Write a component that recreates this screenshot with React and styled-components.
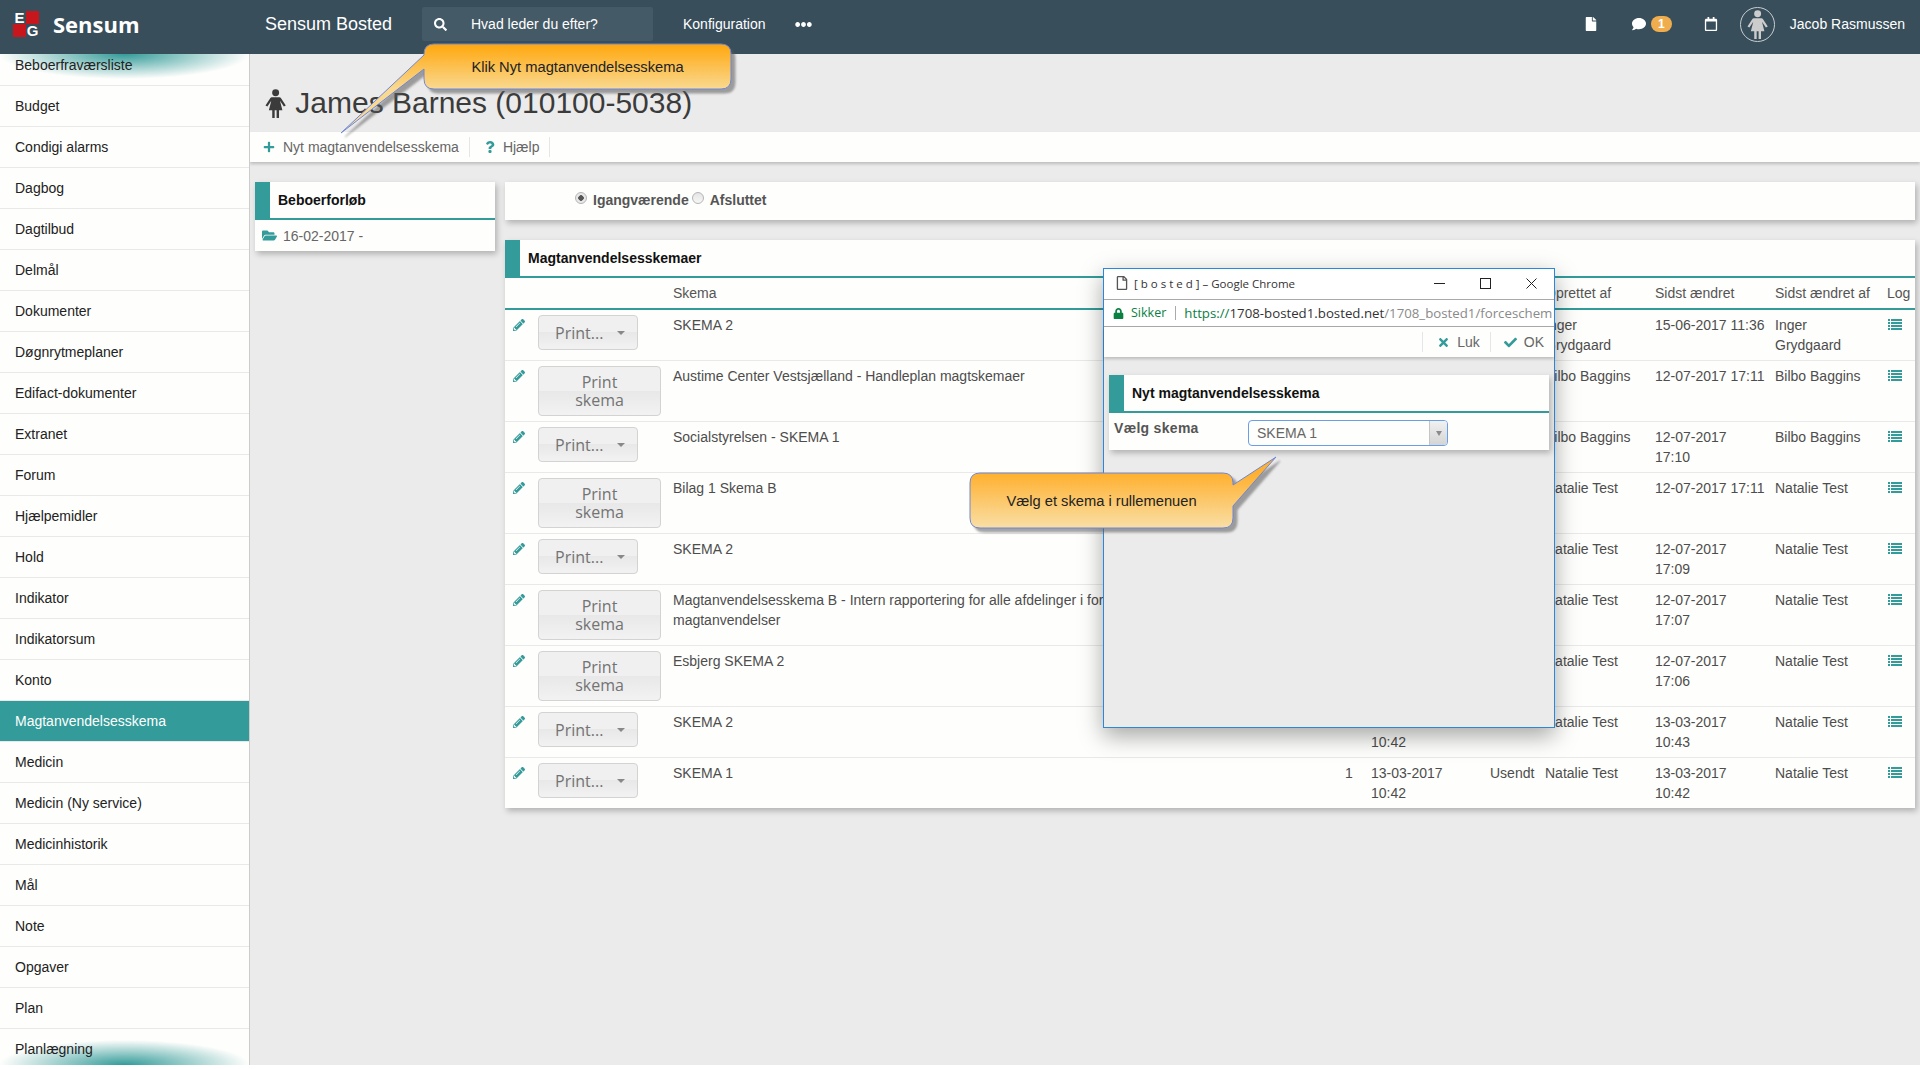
import React from "react";
import styled, { createGlobalStyle } from "styled-components";
import {
  FaSearch,
  FaEllipsisH,
  FaFile,
  FaRegFile,
  FaComment,
  FaRegCalendar,
  FaPlus,
  FaQuestion,
  FaFolderOpen,
  FaPencilAlt,
  FaTimes,
  FaCheck,
  FaLock,
} from "react-icons/fa";

const TEAL = "#339b99";

const GlobalStyle = createGlobalStyle`
  html, body {
    margin: 0;
    padding: 0;
    background: #ffffff;
  }
  body {
    font-family: "Liberation Sans", Arial, sans-serif;
    font-size: 14px;
    color: #4d4d4d;
  }
`;

const Page = styled.div`
  position: relative;
  width: 1920px;
  height: 1065px;
  display: flex;
  flex-direction: column;
  overflow: hidden;
  background: #ebebec;
`;

const Header = styled.header`
  height: 54px;
  flex: none;
  box-sizing: border-box;
  padding-bottom: 6px;
  display: flex;
  align-items: center;
  background: #384e5b;
  color: #ffffff;
  position: relative;
  z-index: 3;
`;

const Logo = styled.div`
  display: flex;
  align-items: center;
  width: 265px;
  padding-left: 13px;
  box-sizing: border-box;
`;

const LogoMark = styled.div`
  display: grid;
  grid-template-columns: 13px 13px;
  grid-template-rows: 13px 13px;
`;

const LogoCell = styled.span`
  display: flex;
  align-items: center;
  justify-content: center;
  font-weight: 700;
  font-size: 15px;
  line-height: 13px;
  background: ${(p) => (p.$red ? "#c8161d" : "transparent")};
`;

const LogoName = styled.span`
  font-family: "Open Sans", sans-serif;
  font-weight: 700;
  font-size: 22px;
  margin-left: 14px;
`;

const Product = styled.span`
  font-size: 18px;
  width: 157px;
`;

const Search = styled.div`
  width: 231px;
  height: 34px;
  display: flex;
  align-items: center;
  background: #445a66;
  border-radius: 2px;
  padding-left: 12px;
  box-sizing: border-box;
  font-size: 14px;
  svg {
    font-size: 13px;
    margin-right: 24px;
  }
`;

const MenuLink = styled.span`
  font-size: 14px;
  margin-left: 30px;
`;

const Dots = styled.span`
  display: flex;
  margin-left: 29px;
  font-size: 17px;
`;

const HeaderRight = styled.div`
  margin-left: auto;
  display: flex;
  align-items: center;
  padding-right: 15px;
`;

const HeaderIcon = styled.span`
  display: flex;
  font-size: 14px;
  margin-right: ${(p) => p.$gap}px;
`;

const Badge = styled.span`
  width: 21px;
  height: 16px;
  margin: 0 32px 0 5px;
  border-radius: 8px;
  background: #f0ad4e;
  font-size: 12px;
  font-weight: 700;
  display: flex;
  align-items: center;
  justify-content: center;
`;

const Avatar = styled.span`
  width: 35px;
  height: 35px;
  box-sizing: border-box;
  border: 1px solid #c9cdd0;
  border-radius: 50%;
  display: flex;
  align-items: center;
  justify-content: center;
  margin-right: 15px;
  color: #cccccc;
`;

const Body = styled.div`
  flex: 1;
  min-height: 0;
  display: flex;
`;

const Sidebar = styled.nav`
  position: relative;
  width: 250px;
  flex: none;
  box-sizing: border-box;
  border-right: 1px solid #cccccc;
  background: #fefefc;
  overflow: hidden;
`;

const ScrollShade = styled.div`
  position: absolute;
  left: 0;
  right: 0;
  height: 25px;
  ${(p) => (p.$bottom ? "bottom: 0;" : "top: 0;")}
  background: radial-gradient(
    ellipse 125px 25px at 50% ${(p) => (p.$bottom ? "100%" : "0")},
    ${TEAL},
    rgba(51, 155, 153, 0)
  );
`;

const SideList = styled.div`
  position: relative;
  margin-top: -9px;
`;

const SideItem = styled.div`
  height: 41px;
  box-sizing: border-box;
  border-bottom: 1px solid #e9e9e9;
  padding-left: 15px;
  display: flex;
  align-items: center;
  color: ${(p) => (p.$active ? "#ffffff" : "#222222")};
  background: ${(p) => (p.$active ? TEAL : "transparent")};
`;

const Main = styled.main`
  flex: 1;
  min-width: 0;
`;

const TitleRow = styled.div`
  height: 78px;
  display: flex;
  align-items: center;
  padding: 20px 0 0 15px;
  box-sizing: border-box;
  color: #3b3b3b;
`;

const Title = styled.h1`
  margin: 0 0 0 9px;
  font-size: 30px;
  font-weight: 400;
`;

const Toolbar = styled.div`
  height: 30px;
  display: flex;
  align-items: center;
  background: #fefefc;
  box-shadow: 0 2px 3px rgba(0, 0, 0, 0.2);
  padding-left: 13px;
  color: #666666;
`;

const ToolItem = styled.div`
  height: 20px;
  display: flex;
  align-items: center;
  padding-right: 10px;
  margin-right: ${(p) => p.$gap || 0}px;
  border-right: 1px solid #e6e6e6;
  svg {
    color: ${TEAL};
    font-size: 12px;
    margin-right: ${(p) => p.$iconGap}px;
  }
`;

const Columns = styled.div`
  display: flex;
  gap: 10px;
  padding: 20px 5px 0;
`;

const LeftCol = styled.div`
  width: 240px;
  flex: none;
`;

const RightCol = styled.div`
  flex: 1;
  min-width: 0;
  display: flex;
  flex-direction: column;
  gap: 20px;
`;

const Panel = styled.section`
  background: #fefefc;
  box-shadow: 2px 3px 6px rgba(0, 0, 0, 0.25);
`;

const PanelHead = styled.div`
  height: 38px;
  box-sizing: border-box;
  border-bottom: 2px solid ${TEAL};
  border-left: 15px solid ${TEAL};
  padding-left: 8px;
  display: flex;
  align-items: center;
  font-weight: 700;
  color: #111111;
`;

const CourseRow = styled.div`
  height: 31px;
  display: flex;
  align-items: center;
  padding-left: 7px;
  color: #666666;
  svg {
    color: ${TEAL};
    font-size: 15px;
    margin-right: 6px;
  }
`;

const RadioBar = styled.div`
  height: 38px;
  box-sizing: border-box;
  padding: 0 0 2px 70px;
  display: flex;
  align-items: center;
  font-weight: 700;
  color: #555555;
`;

const RadioDot = styled.span`
  width: 12px;
  height: 12px;
  box-sizing: border-box;
  border: 1px solid #b5b5b5;
  border-radius: 50%;
  background: ${(p) =>
    p.$on
      ? "radial-gradient(circle, #555 0 2.5px, #e8e8e8 3px)"
      : "linear-gradient(#e4e4e4, #f7f7f7)"};
  margin: 0 6px 4px 0;
`;

const RadioText = styled.span`
  margin-right: ${(p) => p.$gap || 0}px;
`;

const Table = styled.table`
  width: 100%;
  table-layout: fixed;
  border-collapse: collapse;
  line-height: 20px;
`;

const HeadCell = styled.th`
  height: 30px;
  padding: 0 0 0 5px;
  font-weight: 400;
  text-align: left;
  color: #555555;
  border-bottom: 2px solid ${TEAL};
`;

const Row = styled.tr`
  border-top: 1px solid #e9e9e9;
  &:first-child {
    border-top: none;
  }
`;

const Cell = styled.td`
  padding: 5px 0 5px 5px;
  vertical-align: top;
  white-space: pre-line;
  overflow: hidden;
`;

const EditIcon = styled(FaPencilAlt)`
  display: block;
  color: ${TEAL};
  font-size: 12px;
  margin: 4px 0 0 3px;
`;

const PrintButton = styled.div`
  width: ${(p) => (p.$wide ? 123 : 100)}px;
  height: ${(p) => (p.$wide ? 50 : 35)}px;
  box-sizing: border-box;
  border: 1px solid #d3d3d3;
  border-radius: 4px;
  background: linear-gradient(#f0f0f0 50%, #e8e8e8 50%, #f2f2f2);
  font-family: "Open Sans", sans-serif;
  font-size: 16px;
  line-height: 18px;
  color: #737373;
  display: flex;
  align-items: center;
  justify-content: ${(p) => (p.$wide ? "center" : "flex-start")};
  text-align: center;
  padding-left: ${(p) => (p.$wide ? 0 : 16)}px;
  position: relative;
`;

const Caret = styled.span`
  position: absolute;
  left: 78px;
  top: 15px;
  border-left: 4px solid transparent;
  border-right: 4px solid transparent;
  border-top: 4px solid #888888;
`;

const Dialog = styled.div`
  position: absolute;
  left: 1103px;
  top: 268px;
  width: 452px;
  height: 460px;
  box-sizing: border-box;
  border: 1px solid #2b88d8;
  background: #ebebec;
  box-shadow: 0 8px 22px rgba(0, 0, 0, 0.35);
  display: flex;
  flex-direction: column;
  z-index: 4;
`;

const WinTitle = styled.div`
  height: 28px;
  flex: none;
  background: #ffffff;
  display: flex;
  align-items: center;
  padding: 0 0 2px 11px;
  font-family: "Open Sans", sans-serif;
  font-size: 11.5px;
  color: #333333;
  border-bottom: 1px solid #aaaaaa;
  svg.doc {
    color: #555555;
    font-size: 14px;
    margin-right: 5px;
  }
`;

const WinControls = styled.div`
  margin-left: auto;
  display: flex;
  gap: 35px;
  padding-right: 17px;
`;

const AddressBar = styled.div`
  height: 26px;
  flex: none;
  background: #ffffff;
  display: flex;
  align-items: center;
  padding-left: 9px;
  font-family: "Open Sans", sans-serif;
  font-size: 13.25px;
  color: #8a8a8a;
  white-space: nowrap;
  overflow: hidden;
  border-bottom: 1px solid #aaaaaa;
`;

const Secure = styled.span`
  display: flex;
  align-items: center;
  font-size: 12.5px;
  color: #0b8043;
  padding-right: 9px;
  margin-right: 8px;
  border-right: 1px solid #aaaaaa;
  line-height: 14px;
  svg {
    font-size: 11px;
    margin-right: 7px;
  }
`;

const UrlScheme = styled.span`
  color: #0b8043;
`;

const UrlHost = styled.span`
  color: #333333;
`;

const DialogBar = styled.div`
  height: 30px;
  flex: none;
  background: #fefefc;
  box-shadow: 0 2px 3px rgba(0, 0, 0, 0.2);
  display: flex;
  justify-content: flex-end;
  align-items: center;
  color: #666666;
`;

const DialogAction = styled.div`
  height: 20px;
  display: flex;
  align-items: center;
  border-left: 1px solid #e6e6e6;
  padding: ${(p) => p.$pad};
  svg {
    color: ${TEAL};
    font-size: 13px;
    margin-right: 7px;
  }
`;

const DialogPanelWrap = styled.div`
  padding: 18px 5px 0;
`;

const FormRow = styled.div`
  height: 37px;
  display: flex;
  padding-left: 5px;
`;

const FormLabel = styled.span`
  width: 134px;
  margin-top: 7px;
  font-weight: 700;
  color: #555555;
  letter-spacing: 0.3px;
`;

const Select = styled.div`
  width: 200px;
  height: 26px;
  margin-top: 7px;
  box-sizing: border-box;
  border: 1px solid #6a9fe8;
  border-radius: 4px;
  display: flex;
  align-items: center;
  padding-left: 8px;
  color: #666666;
  position: relative;
  overflow: hidden;
`;

const SelectButton = styled.span`
  position: absolute;
  right: 0;
  top: 0;
  bottom: 0;
  width: 17px;
  border-left: 1px solid #c5c5c5;
  background: linear-gradient(#f1f1f1, #d4d4d4);
  display: flex;
  align-items: center;
  justify-content: center;
  &::after {
    content: "";
    border-left: 3.5px solid transparent;
    border-right: 3.5px solid transparent;
    border-top: 5px solid #8a8a8a;
  }
`;

const CalloutBox = styled.div`
  position: absolute;
  left: ${(p) => p.$left}px;
  top: ${(p) => p.$top}px;
  width: ${(p) => p.$width}px;
  height: ${(p) => p.$height}px;
  z-index: 5;
  svg {
    display: block;
    overflow: visible;
    filter: drop-shadow(4px 4px 1px rgba(90, 90, 90, 0.55));
  }
`;

const CalloutText = styled.div`
  position: absolute;
  left: ${(p) => p.$left}px;
  top: ${(p) => p.$top}px;
  width: ${(p) => p.$width}px;
  height: ${(p) => p.$height}px;
  display: flex;
  align-items: center;
  justify-content: center;
  font-size: 14.7px;
  color: #222222;
`;

const sideItems = [
  "Beboerfraværsliste",
  "Budget",
  "Condigi alarms",
  "Dagbog",
  "Dagtilbud",
  "Delmål",
  "Dokumenter",
  "Døgnrytmeplaner",
  "Edifact-dokumenter",
  "Extranet",
  "Forum",
  "Hjælpemidler",
  "Hold",
  "Indikator",
  "Indikatorsum",
  "Konto",
  "Magtanvendelsesskema",
  "Medicin",
  "Medicin (Ny service)",
  "Medicinhistorik",
  "Mål",
  "Note",
  "Opgaver",
  "Plan",
  "Planlægning",
];

const colWidths = [28, 135, 672, 26, 119, 55, 110, 120, 112, 33];

const rows = [
  { name: "SKEMA 2", by: "Inger\nGrydgaard", created: "15-06-2017\n11:30", changed: "15-06-2017 11:36", changedBy: "Inger\nGrydgaard" },
  { name: "Austime Center Vestsjælland - Handleplan magtskemaer", wide: true, by: "Bilbo Baggins", created: "12-07-2017\n17:11", changed: "12-07-2017 17:11", changedBy: "Bilbo Baggins" },
  { name: "Socialstyrelsen - SKEMA 1", by: "Bilbo Baggins", created: "12-07-2017\n17:10", changed: "12-07-2017\n17:10", changedBy: "Bilbo Baggins" },
  { name: "Bilag 1 Skema B", wide: true, by: "Natalie Test", created: "12-07-2017\n17:11", changed: "12-07-2017 17:11", changedBy: "Natalie Test" },
  { name: "SKEMA 2", by: "Natalie Test", created: "12-07-2017\n17:09", changed: "12-07-2017\n17:09", changedBy: "Natalie Test" },
  { name: "Magtanvendelsesskema B - Intern rapportering for alle afdelinger i forbindelse med\nmagtanvendelser", wide: true, by: "Natalie Test", created: "12-07-2017\n17:07", changed: "12-07-2017\n17:07", changedBy: "Natalie Test" },
  { name: "Esbjerg SKEMA 2", wide: true, by: "Natalie Test", created: "12-07-2017\n17:06", changed: "12-07-2017\n17:06", changedBy: "Natalie Test" },
  { name: "SKEMA 2", by: "Natalie Test", created: "13-03-2017\n10:42", changed: "13-03-2017\n10:43", changedBy: "Natalie Test" },
  { name: "SKEMA 1", by: "Natalie Test", created: "13-03-2017\n10:42", changed: "13-03-2017\n10:42", changedBy: "Natalie Test" },
];

const FemaleIcon = ({ size }) => (
  <svg width={(size * 22) / 30} height={size} viewBox="0 0 22 30" fill="currentColor">
    <circle cx="11" cy="3.8" r="3.6" />
    <path d="M7 8.5h8q1 0 1.6 1L21.5 17l-2 1.2-4-6L18 22h-3.5v8H12v-8h-2v8H7.500v-8H4l2.500-9.800-4 6-2-1.200L5.400 9.500q.6-1 1.600-1z" />
  </svg>
);

const LogIcon = () => (
  <svg width="14" height="11" viewBox="0 0 14 11" fill={TEAL} style={{ display: "block", margin: "4px 0 0 1px" }}>
    <path d="M0 0h2v2H0zM3 0h11v2H3zM0 3h2v2H0zM3 3h11v2H3zM0 6h2v2H0zM3 6h11v2H3zM0 9h2v2H0zM3 9h11v2H3z" />
  </svg>
);

const WinIcon = ({ children }) => (
  <svg width="11" height="11" viewBox="0 0 11 11" fill="none" stroke="#222" strokeWidth="1">
    {children}
  </svg>
);

const Callout = ({ id, box, text, path, gradY, stops }) => (
  <CalloutBox $left={box.x} $top={box.y} $width={box.w} $height={box.h}>
    <svg width={box.w} height={box.h} viewBox={`${box.x} ${box.y} ${box.w} ${box.h}`}>
      <defs>
        <linearGradient id={id} gradientUnits="userSpaceOnUse" x1="0" x2="0" y1={gradY[0]} y2={gradY[1]}>
          <stop offset="0" stopColor={stops[0]} />
          <stop offset="1" stopColor={stops[1]} />
        </linearGradient>
      </defs>
      <path d={path} fill={`url(#${id})`} stroke="#6f86d6" strokeWidth="1" />
    </svg>
    <CalloutText $left={text.x - box.x} $top={text.y - box.y} $width={text.w} $height={text.h}>
      {text.label}
    </CalloutText>
  </CalloutBox>
);

const App = () => {
  return (
    <Page>
      <GlobalStyle />
      <Header>
        <Logo>
          <LogoMark>
            <LogoCell>E</LogoCell>
            <LogoCell $red />
            <LogoCell $red />
            <LogoCell>G</LogoCell>
          </LogoMark>
          <LogoName>Sensum</LogoName>
        </Logo>
        <Product>Sensum Bosted</Product>
        <Search>
          <FaSearch />
          Hvad leder du efter?
        </Search>
        <MenuLink>Konfiguration</MenuLink>
        <Dots>
          <FaEllipsisH />
        </Dots>
        <HeaderRight>
          <HeaderIcon $gap={34}>
            <FaFile />
          </HeaderIcon>
          <HeaderIcon $gap={0}>
            <FaComment />
          </HeaderIcon>
          <Badge>1</Badge>
          <HeaderIcon $gap={22}>
            <FaRegCalendar />
          </HeaderIcon>
          <Avatar>
            <FemaleIcon size={29} />
          </Avatar>
          <span>Jacob Rasmussen</span>
        </HeaderRight>
      </Header>
      <Body>
        <Sidebar>
          <ScrollShade />
          <ScrollShade $bottom />
          <SideList>
            {sideItems.map((item) => (
              <SideItem key={item} $active={item === "Magtanvendelsesskema"}>
                {item}
              </SideItem>
            ))}
          </SideList>
        </Sidebar>
        <Main>
          <TitleRow>
            <FemaleIcon size={29} />
            <Title>James Barnes (010100-5038)</Title>
          </TitleRow>
          <Toolbar>
            <ToolItem $iconGap={8} $gap={14}>
              <FaPlus />
              Nyt magtanvendelsesskema
            </ToolItem>
            <ToolItem $iconGap={7}>
              <FaQuestion />
              Hjælp
            </ToolItem>
          </Toolbar>
          <Columns>
            <LeftCol>
              <Panel>
                <PanelHead>Beboerforløb</PanelHead>
                <CourseRow>
                  <FaFolderOpen />
                  16-02-2017 -
                </CourseRow>
              </Panel>
            </LeftCol>
            <RightCol>
              <Panel>
                <RadioBar>
                  <RadioDot $on />
                  <RadioText $gap={3}>Igangværende</RadioText>
                  <RadioDot />
                  <RadioText>Afsluttet</RadioText>
                </RadioBar>
              </Panel>
              <Panel>
                <PanelHead>Magtanvendelsesskemaer</PanelHead>
                <Table>
                  <colgroup>
                    {colWidths.map((w, i) => (
                      <col key={i} width={w} />
                    ))}
                  </colgroup>
                  <thead>
                    <tr>
                      <HeadCell />
                      <HeadCell />
                      <HeadCell>Skema</HeadCell>
                      <HeadCell />
                      <HeadCell>Oprettet</HeadCell>
                      <HeadCell>Status</HeadCell>
                      <HeadCell>Oprettet af</HeadCell>
                      <HeadCell>Sidst ændret</HeadCell>
                      <HeadCell>Sidst ændret af</HeadCell>
                      <HeadCell>Log</HeadCell>
                    </tr>
                  </thead>
                  <tbody>
                    {rows.map((row, i) => (
                      <Row key={i}>
                        <Cell>
                          <EditIcon />
                        </Cell>
                        <Cell>
                          {row.wide ? (
                            <PrintButton $wide>
                              Print
                              <br />
                              skema
                            </PrintButton>
                          ) : (
                            <PrintButton>
                              Print...
                              <Caret />
                            </PrintButton>
                          )}
                        </Cell>
                        <Cell>{row.name}</Cell>
                        <Cell>1</Cell>
                        <Cell>{row.created}</Cell>
                        <Cell>Usendt</Cell>
                        <Cell>{row.by}</Cell>
                        <Cell>{row.changed}</Cell>
                        <Cell>{row.changedBy}</Cell>
                        <Cell>
                          <LogIcon />
                        </Cell>
                      </Row>
                    ))}
                  </tbody>
                </Table>
              </Panel>
            </RightCol>
          </Columns>
        </Main>
      </Body>

      <Dialog>
        <WinTitle>
          <FaRegFile className="doc" />
          [ b o s t e d ] – Google Chrome
          <WinControls>
            <WinIcon>
              <path d="M0 5.500h11" />
            </WinIcon>
            <WinIcon>
              <rect x=".5" y=".5" width="10" height="10" />
            </WinIcon>
            <WinIcon>
              <path d="M.5.5l10 10M10.500.5l-10 10" />
            </WinIcon>
          </WinControls>
        </WinTitle>
        <AddressBar>
          <Secure>
            <FaLock />
            Sikker
          </Secure>
          <UrlScheme>https://</UrlScheme>
          <UrlHost>1708-bosted1.bosted.net</UrlHost>
          /1708_bosted1/forceschem
        </AddressBar>
        <DialogBar>
          <DialogAction $pad="0 10px 0 14px">
            <FaTimes />
            Luk
          </DialogAction>
          <DialogAction $pad="0 10px 0 13px">
            <FaCheck />
            OK
          </DialogAction>
        </DialogBar>
        <DialogPanelWrap>
          <Panel>
            <PanelHead>Nyt magtanvendelsesskema</PanelHead>
            <FormRow>
              <FormLabel>Vælg skema</FormLabel>
              <Select>
                SKEMA 1
                <SelectButton />
              </Select>
            </FormRow>
          </Panel>
        </DialogPanelWrap>
      </Dialog>

      <Callout
        id="calloutTop"
        box={{ x: 335, y: 40, w: 405, h: 100 }}
        text={{ x: 424, y: 44, w: 307, h: 45, label: "Klik Nyt magtanvendelsesskema" }}
        path="M434 44H721Q731 44 731 54V79Q731 89 721 89H434Q424 89 424 79V69L341 133L424 55V54Q424 44 434 44Z"
        gradY={[44, 89]}
        stops={["#ffa70c", "#f9d991"]}
      />
      <Callout
        id="calloutForm"
        box={{ x: 960, y: 450, w: 330, h: 90 }}
        text={{ x: 970, y: 473, w: 263, h: 55, label: "Vælg et skema i rullemenuen" }}
        path="M980 473H1223Q1233 473 1233 483V485L1276 457L1233 506V518Q1233 528 1223 528H980Q970 528 970 518V483Q970 473 980 473Z"
        gradY={[473, 528]}
        stops={["#ffb02e", "#f9dfa6"]}
      />
    </Page>
  );
};

export default App;
